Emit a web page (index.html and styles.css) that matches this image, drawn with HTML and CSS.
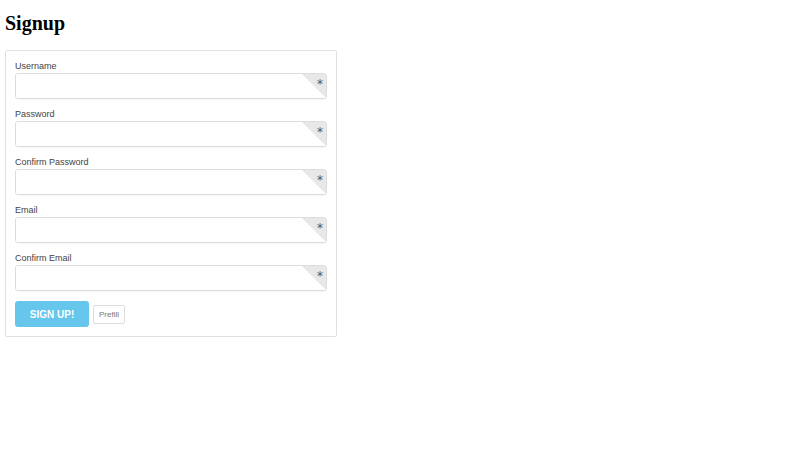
FILE: index.html
```html
<!DOCTYPE html>
<html>
<head>
<meta charset="utf-8">
<link rel="stylesheet" href="styles.css">
</head>
<body>
<h1 class="title">Signup</h1>
<form class="signup">
  <div class="field">
    <label class="label">Username</label>
    <div class="input-wrap"><input class="input" type="text"><span class="corner"><span class="star">*</span></span></div>
  </div>
  <div class="field">
    <label class="label">Password</label>
    <div class="input-wrap"><input class="input" type="password"><span class="corner"><span class="star">*</span></span></div>
  </div>
  <div class="field">
    <label class="label">Confirm Password</label>
    <div class="input-wrap"><input class="input" type="password"><span class="corner"><span class="star">*</span></span></div>
  </div>
  <div class="field">
    <label class="label">Email</label>
    <div class="input-wrap"><input class="input" type="text"><span class="corner"><span class="star">*</span></span></div>
  </div>
  <div class="field">
    <label class="label">Confirm Email</label>
    <div class="input-wrap"><input class="input" type="text"><span class="corner"><span class="star">*</span></span></div>
  </div>
  <div class="actions">
    <button type="button" class="btn-primary">SIGN UP!</button>
    <button type="button" class="btn-small">Prefill</button>
  </div>
</form>
</body>
</html>
```
FILE: styles.css
```css
body {
  margin: 0;
  padding: 0 5px;
  background: #fff;
}
.title {
  font-family: "Liberation Serif", serif;
  font-size: 20px;
  font-weight: bold;
  margin: 11px 0 14px;
  line-height: 25px;
  color: #000;
}
.signup {
  width: 312px;
  border: 1px solid #e0e0e0;
  border-radius: 2px;
  padding: 9px;
  font-family: "Liberation Sans", Arial, sans-serif;
}
.field {
  margin-bottom: 9px;
}
.label {
  display: block;
  font-size: 9px;
  line-height: 12px;
  padding-bottom: 1px;
  color: #444;
}
.input-wrap {
  position: relative;
  height: 26px;
  border: 1px solid #dcdcdc;
  border-radius: 3px;
  overflow: hidden;
  box-sizing: border-box;
  box-shadow: 0 1px 0 rgba(0,0,0,0.03);
}
.input {
  display: block;
  width: 100%;
  height: 100%;
  border: 0;
  outline: none;
  box-sizing: border-box;
  padding: 0 8px;
  background: #fff;
}
.corner {
  position: absolute;
  top: 0;
  right: 0;
  width: 0;
  height: 0;
  border-top: 24px solid #e8e8e8;
  border-left: 24px solid transparent;
}
.star {
  position: absolute;
  top: -20px;
  right: 3px;
  font-size: 12px;
  line-height: 12px;
  color: #555;
  font-family: "DejaVu Sans", sans-serif;
}
.actions {
  display: flex;
  align-items: center;
  gap: 4px;
  padding-top: 1px;
}
.btn-primary {
  width: 74px;
  height: 26px;
  border: 0;
  border-radius: 3px;
  background: #67c6eb;
  color: #fff;
  font-family: "Liberation Sans", Arial, sans-serif;
  font-weight: bold;
  font-size: 10px;
  padding: 0;
}
.btn-small {
  height: 19px;
  width: 32px;
  padding: 0;
  border: 1px solid #ddd;
  border-radius: 2px;
  background: #fff;
  color: #777;
  font-family: "Liberation Sans", Arial, sans-serif;
  font-size: 8px;
}
```
